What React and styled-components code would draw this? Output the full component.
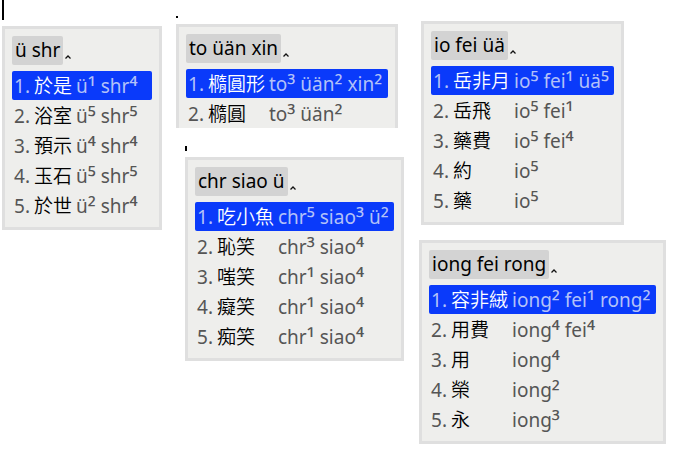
import React from "react";
import styled, { createGlobalStyle } from "styled-components";

const GlobalStyle = createGlobalStyle`
  *, *::before, *::after { box-sizing: border-box; }
  body {
    margin: 0;
    background: #ffffff;
    color: #000000;
    font-family: "Noto Sans", "Noto Sans CJK TC", sans-serif;
    font-size: 19px;
    line-height: 29px;
  }
`;

const Board = styled.main`
  display: flex;
  align-items: flex-start;
  padding-left: 2px;
`;

const Column = styled.div`
  display: flex;
  flex-direction: column;
  align-items: flex-start;
  flex: none;
  padding-top: ${(p) => p.$top}px;
  margin-right: ${(p) => p.$gap || 0}px;
`;

const Entry = styled.section`
  margin-left: ${(p) => p.$indent || 0}px;
  margin-bottom: ${(p) => p.$after || 0}px;
`;

const InsertionBar = styled.div`
  width: 2px;
  height: ${(p) => p.$height}px;
  margin-bottom: 6px;
  background: #000000;
`;

const Panel = styled.div`
  min-width: ${(p) => p.$min}px;
  padding: 7px 7px ${(p) => (p.$cut ? 0 : 7)}px;
  border: 3px solid #dfdfdf;
  border-bottom-width: ${(p) => (p.$cut ? 0 : 3)}px;
  background: #eeeeec;
`;

const Composition = styled.div`
  display: flex;
  margin-bottom: 6px;
  white-space: pre;
`;

const Preedit = styled.span`
  height: 29px;
  padding: 0 3px;
  border-radius: 2px;
  background: #d3d3d3;
`;

const Caret = styled.svg`
  width: 6px;
  height: 4px;
  margin: 19px 0 0 2px;
  fill: none;
  stroke: #111111;
  stroke-width: 1.25;
`;

const Candidates = styled.ol`
  display: flex;
  flex-direction: column;
  gap: 1px;
  margin: 0;
  padding: 0;
  list-style: none;
`;

const Candidate = styled.button`
  display: flex;
  align-items: baseline;
  width: 100%;
  height: 29px;
  padding: 0 2px;
  border: 0;
  border-radius: 2px;
  background: ${(p) => (p.$selected ? "#0a3afa" : "transparent")};
  color: ${(p) => (p.$selected ? "#b3c1f8" : "#555555")};
  font: inherit;
  line-height: 27px;
  text-align: left;
  white-space: pre;
`;

const Label = styled.span`
  flex: none;
  width: 20px;
`;

const Word = styled.span`
  flex: none;
  width: ${(p) => p.$chars}em;
  margin-right: 4px;
  color: ${(p) => (p.$selected ? "#ffffff" : "#000000")};
  font-family: "Noto Sans CJK TC", sans-serif;
  font-weight: 350;
`;

const Reading = styled.span`
  flex: none;
`;

const Tone = styled.span`
  font-size: 23px;
  line-height: 0;
  vertical-align: -3px;
`;

function CandidatePanel({ preedit, items, min, cut }) {
  const chars = Math.max(...items.map(([word]) => word.length));
  return (
    <Panel $min={min} $cut={cut}>
      <Composition>
        <Preedit>{preedit}</Preedit>
        <Caret viewBox="0 0 6 4" aria-hidden="true">
          <path d="M.5 3.5 3 1l2.5 2.5" />
        </Caret>
      </Composition>
      <Candidates>
        {items.map(([word, reading], i) => (
          <li key={word}>
            <Candidate type="button" $selected={i === 0}>
              <Label>{i + 1}.</Label>
              <Word $chars={chars} $selected={i === 0}>{word}</Word>
              <Reading>
                {reading.split(/([¹²³⁴⁵])/).map((part, n) =>
                  n % 2 ? <Tone key={n}>{part}</Tone> : part
                )}
              </Reading>
            </Candidate>
          </li>
        ))}
      </Candidates>
    </Panel>
  );
}

const bathroom = [
  ["於是", "ü¹ shr⁴"],
  ["浴室", "ü⁵ shr⁵"],
  ["預示", "ü⁴ shr⁴"],
  ["玉石", "ü⁵ shr⁵"],
  ["於世", "ü² shr⁴"],
];

const ellipse = [
  ["橢圓形", "to³ üän² xin²"],
  ["橢圓", "to³ üän²"],
];

const fish = [
  ["吃小魚", "chr⁵ siao³ ü²"],
  ["恥笑", "chr³ siao⁴"],
  ["嗤笑", "chr¹ siao⁴"],
  ["癡笑", "chr¹ siao⁴"],
  ["痴笑", "chr¹ siao⁴"],
];

const medicine = [
  ["岳非月", "io⁵ fei¹ üä⁵"],
  ["岳飛", "io⁵ fei¹"],
  ["藥費", "io⁵ fei⁴"],
  ["約", "io⁵"],
  ["藥", "io⁵"],
];

const velvet = [
  ["容非絨", "iong² fei¹ rong²"],
  ["用費", "iong⁴ fei⁴"],
  ["用", "iong⁴"],
  ["榮", "iong²"],
  ["永", "iong³"],
];

export default function App() {
  return (
    <>
      <GlobalStyle />
      <Board>
        <Column $top={0} $gap={14}>
          <Entry>
            <InsertionBar $height={20} />
            <CandidatePanel preedit="ü shr" items={bathroom} min={160} />
          </Entry>
        </Column>
        <Column $top={16} $gap={15}>
          <Entry $after={18}>
            <InsertionBar $height={2} />
            <CandidatePanel preedit="to üän xin" items={ellipse} min={222} cut />
          </Entry>
          <Entry $indent={9}>
            <InsertionBar $height={5} />
            <CandidatePanel preedit="chr siao ü" items={fish} min={219} />
          </Entry>
        </Column>
        <Column $top={21}>
          <Entry $indent={2} $after={15}>
            <CandidatePanel preedit="io fei üä" items={medicine} min={203} />
          </Entry>
          <Entry>
            <CandidatePanel preedit="iong fei rong" items={velvet} min={247} />
          </Entry>
        </Column>
      </Board>
    </>
  );
}
